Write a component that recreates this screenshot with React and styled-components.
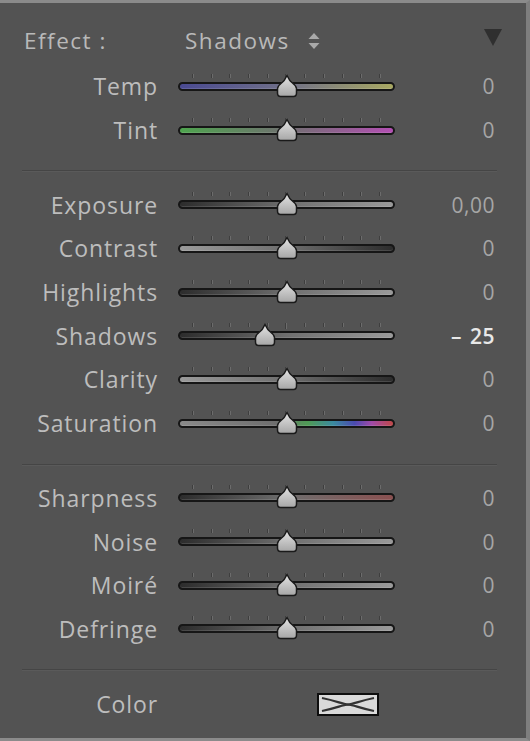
import React from 'react';
import styled, { createGlobalStyle } from 'styled-components';

const GlobalStyle = createGlobalStyle`
    html, body {
        margin: 0;
        padding: 0;
        background: #535353;
    }
`;

const Panel = styled.div`
    width: 530px;
    height: 741px;
    box-sizing: border-box;
    background: #535353;
    border-top: 3px solid #8b8b8b;
    border-right: 4px solid #7e7e7e;
    border-bottom: 3px solid #8b8b8b;
    font-family: "Open Sans", "DejaVu Sans", sans-serif;
    color: #bcbcbc;
    padding-top: 18px;
`;

const Header = styled.div`
    display: flex;
    align-items: center;
    height: 39px;
    padding-left: 24px;
    padding-right: 24px;
    font-size: 22.5px;
    letter-spacing: 1.5px;
    color: #b9b9b9;
`;

const EffectLabel = styled.div`
    width: 161px;
`;

const EffectValue = styled.div`
    display: flex;
    align-items: center;
    gap: 17px;
`;

const Collapse = styled.div`
    margin-left: auto;
    width: 0;
    height: 0;
    border-left: 9px solid transparent;
    border-right: 9px solid transparent;
    border-top: 17px solid #2f2f2f;
    margin-top: -6px;
`;

const Rows = styled.div`
    margin-top: 5px;
`;

const Row = styled.div`
    display: grid;
    grid-template-columns: 158px 217px 1fr;
    column-gap: 20px;
    align-items: center;
    height: 43.7px;
    padding-right: 31px;
`;

const Label = styled.div`
    text-align: right;
    font-size: 23px;
    letter-spacing: 0.9px;
    color: #bdbdbd;
    white-space: nowrap;
    margin-bottom: 1px;
`;

const Value = styled.div`
    text-align: right;
    font-size: 21px;
    color: ${p => (p.$active ? '#e8e8e8' : '#a6a6a6')};
    font-weight: ${p => (p.$active ? 600 : 400)};
    letter-spacing: 0.5px;
    word-spacing: ${p => (p.$active ? '2px' : '0')};
    margin-bottom: 1px;
`;

const Divider = styled.div`
    margin: 18px 29px 11px 22px;
    height: 1px;
    background: #454545;
    border-bottom: 1px solid #5a5a5a;
`;

const SliderBox = styled.div`
    position: relative;
    height: 26px;
`;

const Ticks = styled.div`
    position: absolute;
    left: 14px;
    right: 15px;
    top: 0;
    display: flex;
    justify-content: space-between;
`;

const Tick = styled.span`
    width: 1px;
    height: ${p => (p.$major ? 6 : 4)}px;
    background: #3e3e3e;
    box-shadow: 1px 0 0 #6c6c6c;
`;

const Track = styled.div`
    position: absolute;
    left: 0;
    right: 0;
    top: 8px;
    height: 9px;
    box-sizing: border-box;
    border: 2px solid #161616;
    border-radius: 5px;
    background: ${p => p.$bg};
    box-shadow: inset 0 -1px 0 rgba(255, 255, 255, 0.12);
`;

const Thumb = styled.svg`
    position: absolute;
    top: 0;
    width: 24px;
    height: 24px;
    margin-left: -12px;
`;

const Swatch = styled.svg`
    display: block;
    margin-left: 139px;
    width: 62px;
    height: 23px;
`;

const grad = (l, r) => `linear-gradient(to right, ${l}, #6e6e6e 50%, ${r})`;

const sections = [
    [
        { name: 'Temp', bg: 'linear-gradient(to right, #4a4a92, #707088 50%, #a8a862)', value: '0' },
        { name: 'Tint', bg: 'linear-gradient(to right, #4ea44e, #707070 50%, #b34fb3)', value: '0' },
    ],
    [
        { name: 'Exposure', bg: grad('#2c2c2c', '#9a9a9a'), value: '0,00' },
        { name: 'Contrast', bg: grad('#9a9a9a', '#2c2c2c'), value: '0' },
        { name: 'Highlights', bg: grad('#2c2c2c', '#9a9a9a'), value: '0' },
        { name: 'Shadows', bg: grad('#2c2c2c', '#9a9a9a'), value: '\u2013 25', pct: 40, active: true },
        { name: 'Clarity', bg: grad('#9a9a9a', '#2c2c2c'), value: '0' },
        {
            name: 'Saturation',
            bg: 'linear-gradient(to right, #8a8a8a, #6e6e6e 45%, #4f9a55 60%, #3a8aa0 72%, #4a4ab0 82%, #a04aa8 90%, #c04848)',
            value: '0',
        },
    ],
    [
        { name: 'Sharpness', bg: grad('#2c2c2c', '#8a5050'), value: '0' },
        { name: 'Noise', bg: grad('#2c2c2c', '#9a9a9a'), value: '0' },
        { name: 'Moiré', bg: grad('#2c2c2c', '#9a9a9a'), value: '0' },
        { name: 'Defringe', bg: grad('#2c2c2c', '#9a9a9a'), value: '0' },
    ],
];

const ThumbIcon = ({ pct }) => (
    <Thumb viewBox="0 0 24 24" style={{ left: `${pct}%` }}>
        <defs>
            <linearGradient id="thumbFill" x1="0" y1="0" x2="0" y2="1">
                <stop offset="0" stopColor="#e4e4e4" />
                <stop offset="1" stopColor="#a6a6a6" />
            </linearGradient>
        </defs>
        <path
            d="M12 1.5 L14.5 6 C15.5 8.5 21 10 21.5 14.5 L21.5 19 C21.5 21 20.5 22.5 18.5 22.5 L5.5 22.5 C3.5 22.5 2.5 21 2.5 19 L2.5 14.5 C3 10 8.5 8.5 9.5 6 Z"
            fill="url(#thumbFill)"
            stroke="#1a1a1a"
            strokeWidth="1.5"
        />
    </Thumb>
);

const Slider = ({ bg, pct = 50 }) => (
    <SliderBox>
        <Ticks>
            {Array.from({ length: 11 }).map((_, i) => (
                <Tick key={i} $major={i === 5} />
            ))}
        </Ticks>
        <Track $bg={bg} />
        <ThumbIcon pct={pct} />
    </SliderBox>
);

const SortArrows = () => (
    <svg width="14" height="20" viewBox="0 0 14 20">
        <path d="M7 2 L12.5 8 L1.5 8 Z" fill="#a9a9a9" />
        <path d="M1.5 12 L12.5 12 L7 18 Z" fill="#a9a9a9" />
    </svg>
);

const App = () => {
    return <>
        <GlobalStyle />
        <Panel>
            <Header>
                <EffectLabel>Effect :</EffectLabel>
                <EffectValue>
                    Shadows
                    <SortArrows />
                </EffectValue>
                <Collapse />
            </Header>
            {sections.map((rows, si) => (
                <React.Fragment key={si}>
                    {si > 0 && <Divider />}
                    <Rows>
                        {rows.map(r => (
                            <Row key={r.name}>
                                <Label>{r.name}</Label>
                                <Slider bg={r.bg} pct={r.pct} />
                                <Value $active={r.active}>{r.value}</Value>
                            </Row>
                        ))}
                    </Rows>
                </React.Fragment>
            ))}
            <Divider />
            <Row>
                <Label>Color</Label>
                <Swatch viewBox="0 0 62 23">
                    <rect x="1" y="1" width="60" height="21" fill="#dadada" stroke="#0e0e0e" strokeWidth="2" />
                    <path d="M5 5 C20 8 25 11 31 11.5 C37 11 42 8 57 5" fill="none" stroke="#333" strokeWidth="2.2" />
                    <path d="M5 18 C20 15 25 12 31 11.5 C37 12 42 15 57 18" fill="none" stroke="#333" strokeWidth="2.2" />
                </Swatch>
                <div />
            </Row>
        </Panel>
    </>
}

export default App;
